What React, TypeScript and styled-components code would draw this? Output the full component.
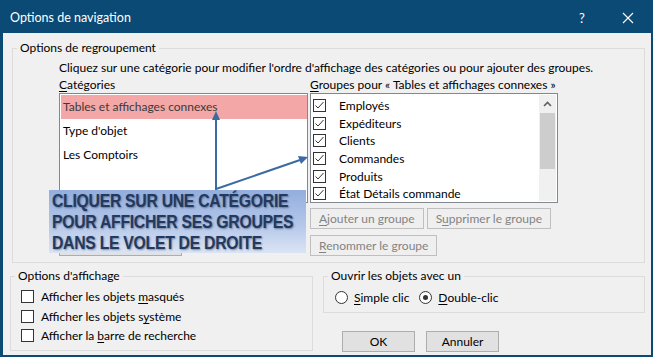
import React from 'react';
import styled, { createGlobalStyle } from 'styled-components';

const GlobalStyle = createGlobalStyle`
  html, body { margin: 0; padding: 0; background: #ffffff; }
  body { font-family: Lato, "Noto Sans", sans-serif; font-size: 12px; color: #000; }
  * { box-sizing: border-box; }
`;

const Page = styled.div`
  position: relative;
  width: 656px;
  height: 359px;
  overflow: hidden;
`;

const Window = styled.div`
  width: 653px;
  height: 357px;
  border: 2px solid #0b4a75;
  border-left-width: 3px;
  background: #f0f0f0;
  display: flex;
  flex-direction: column;
`;

const TitleBar = styled.div`
  height: 31px;
  flex: none;
  background: #0b4a75;
  color: #ffffff;
  display: flex;
  align-items: center;
  padding-left: 7px;
  font-size: 12.5px;
`;

const Title = styled.span`
  flex: 1;
`;

const TitleButton = styled.span`
  width: 46px;
  display: flex;
  justify-content: center;
  align-items: center;
  font-size: 13px;
`;

const Body = styled.div`
  flex: 1;
  display: flex;
  flex-direction: column;
  padding: 0 6px 0 7px;
`;

const Group = styled.fieldset<{ $ml?: number; $mt: number }>`
  margin: ${({ $mt }) => $mt}px 0 0 ${({ $ml }) => $ml ?? 0}px;
  padding: 0;
  border: 1px solid #dcdcdc;
  min-width: 0;
`;

const Legend = styled.legend`
  margin-left: 4px;
  padding: 0 3px;
  line-height: 16px;
`;

const GroupingInner = styled.div`
  padding: 4px 0 6px 46px;
`;

const Instruction = styled.div`
  line-height: 16px;
`;

const Columns = styled.div`
  display: grid;
  grid-template-columns: 249px 248px;
  column-gap: 2px;
  margin-top: 1px;
`;

const Column = styled.div`
  display: flex;
  flex-direction: column;
`;

const Label = styled.div`
  line-height: 16px;
  white-space: nowrap;
`;

const Key = styled.span`
  text-decoration: underline;
  text-underline-offset: 2px;
`;

const ListBox = styled.div`
  height: 110px;
  border: 1px solid #828790;
  background: #ffffff;
  display: flex;
`;

const CategoryList = styled.div`
  flex: 1;
  padding: 1px 0 0 1px;
`;

const CategoryRow = styled.div<{ $selected?: boolean }>`
  height: 24px;
  line-height: 24px;
  padding-left: 2px;
  background: ${({ $selected }) => ($selected ? '#f4a7a7' : 'transparent')};
  color: ${({ $selected }) => ($selected ? '#3a3a3a' : '#000')};
`;

const CheckList = styled.div`
  flex: 1;
  padding: 3px 0 0 2px;
  overflow: hidden;
`;

const CheckRow = styled.div`
  height: 17.6px;
  display: flex;
  align-items: center;
  gap: 13px;
  white-space: nowrap;
`;

const Box = styled.span`
  width: 13px;
  height: 13px;
  flex: none;
  border: 1px solid #333333;
  background: #ffffff;
  display: inline-flex;
`;

const Scrollbar = styled.div`
  width: 17px;
  margin: 1px 1px 1px 0;
  background: #f0f0f0;
  display: flex;
  flex-direction: column;
`;

const ScrollArrow = styled.div`
  height: 17px;
  display: flex;
  align-items: center;
  justify-content: center;
`;

const Thumb = styled.div`
  height: 56px;
  margin: 1px 1px 0;
  background: #cdcdcd;
`;

const ButtonRow = styled.div<{ $mt: number }>`
  display: flex;
  gap: 3px;
  margin-top: ${({ $mt }) => $mt}px;
`;

const Button = styled.button<{ $disabled?: boolean; $w?: number }>`
  height: 21px;
  width: ${({ $w }) => ($w ? `${$w}px` : 'auto')};
  padding: 0 8px;
  font-family: inherit;
  font-size: 12px;
  border: 1px solid ${({ $disabled }) => ($disabled ? '#bfbfbf' : '#adadad')};
  background: ${({ $disabled }) => ($disabled ? '#efefef' : '#e1e1e1')};
  color: ${({ $disabled }) => ($disabled ? '#838383' : '#000')};
  white-space: nowrap;
`;

const BottomRow = styled.div`
  display: flex;
  align-items: flex-start;
`;

const DisplayGroup = styled(Group)`
  width: 303px;
  height: 83px;
`;

const RightSide = styled.div`
  flex: 1;
  margin-left: 10px;
  display: flex;
  flex-direction: column;
`;

const OptionList = styled.div`
  padding: 3px 0 0 10px;
`;

const OptionRow = styled.label`
  height: 19.5px;
  display: flex;
  align-items: center;
  gap: 7px;
`;

const RadioRow = styled.div`
  display: flex;
  align-items: center;
  height: 20px;
  margin: 3px 0 5px;
  padding-left: 11px;
`;

const RadioItem = styled.label`
  display: flex;
  align-items: center;
  gap: 6px;
  margin-right: 10px;
`;

const Radio = styled.span<{ $on?: boolean }>`
  width: 13px;
  height: 13px;
  border: 1px solid #333333;
  border-radius: 50%;
  background: #ffffff;
  display: inline-flex;
  align-items: center;
  justify-content: center;
  &::after {
    content: '';
    width: 5px;
    height: 5px;
    border-radius: 50%;
    background: ${({ $on }) => ($on ? '#333333' : 'transparent')};
  }
`;

const DialogButtons = styled.div`
  display: flex;
  gap: 11px;
  margin: 18px 0 0 19px;
`;

const Callout = styled.div`
  position: absolute;
  left: 49px;
  top: 190px;
  width: 257px;
  height: 63px;
  padding: 1px 0 0 3px;
  background: linear-gradient(to bottom, #93aedd 0%, #b4c7ea 55%, #dbe4f4 100%);
  color: #23395e;
  font-family: "Liberation Sans Narrow", "Liberation Sans", Arial, sans-serif;
  font-weight: bold;
  font-size: 17.5px;
  line-height: 21px;
  letter-spacing: -0.3px;
  text-shadow: 1px 1px 2px rgba(20, 30, 60, 0.45);
`;

const CalloutLine = styled.div`
  white-space: nowrap;
  transform: scaleX(0.9);
  transform-origin: left center;
`;

const Arrows = styled.svg`
  position: absolute;
  left: 0;
  top: 0;
  pointer-events: none;
`;

const Check = () => (
  <svg width="11" height="11" viewBox="0 0 11 11">
    <polyline points="1.5,5.5 4,8 9.5,2" fill="none" stroke="#333" strokeWidth="1" />
  </svg>
);

const groups = ['Employés', 'Expéditeurs', 'Clients', 'Commandes', 'Produits', 'État Détails commande'];

export default function App() {
  return (
    <Page>
      <GlobalStyle />
      <Window>
        <TitleBar>
          <Title>Options de navigation</Title>
          <TitleButton>?</TitleButton>
          <TitleButton>
            <svg width="12" height="12" viewBox="0 0 12 12">
              <path d="M1 1 L11 11 M11 1 L1 11" stroke="#fff" strokeWidth="1.1" />
            </svg>
          </TitleButton>
        </TitleBar>
        <Body>
          <Group $mt={7} $ml={2}>
            <Legend>Options de regroupement</Legend>
            <GroupingInner>
              <Instruction>
                Cliquez sur une catégorie pour modifier l'ordre d'affichage des catégories ou pour ajouter des groupes.
              </Instruction>
              <Columns>
                <Column>
                  <Label>
                    <Key>C</Key>atégories
                  </Label>
                  <ListBox>
                    <CategoryList>
                      <CategoryRow $selected>Tables et affichages connexes</CategoryRow>
                      <CategoryRow>Type d'objet</CategoryRow>
                      <CategoryRow>Les Comptoirs</CategoryRow>
                    </CategoryList>
                  </ListBox>
                  {/* the category buttons lie under the callout; only the frame edge shows */}
                  <ButtonRow $mt={32}>
                    <Button $w={123} aria-hidden="true" />
                  </ButtonRow>
                </Column>
                <Column>
                  <Label>
                    <Key>G</Key>roupes pour « Tables et affichages connexes »
                  </Label>
                  <ListBox>
                    <CheckList>
                      {groups.map((g) => (
                        <CheckRow key={g}>
                          <Box>
                            <Check />
                          </Box>
                          {g}
                        </CheckRow>
                      ))}
                    </CheckList>
                    <Scrollbar>
                      <ScrollArrow>
                        <svg width="9" height="6" viewBox="0 0 9 6">
                          <polyline points="1,5 4.5,1.5 8,5" fill="none" stroke="#606060" strokeWidth="1.6" />
                        </svg>
                      </ScrollArrow>
                      <Thumb />
                    </Scrollbar>
                  </ListBox>
                  <ButtonRow $mt={5}>
                    <Button $disabled>
                      <Key>A</Key>jouter un groupe
                    </Button>
                    <Button $disabled>
                      S<Key>u</Key>pprimer le groupe
                    </Button>
                  </ButtonRow>
                  <ButtonRow $mt={6}>
                    <Button $disabled>
                      <Key>R</Key>enommer le groupe
                    </Button>
                  </ButtonRow>
                </Column>
              </Columns>
            </GroupingInner>
          </Group>
          <BottomRow>
            <DisplayGroup $mt={5}>
              <Legend>Options d'affichage</Legend>
              <OptionList>
                <OptionRow>
                  <Box />
                  <span>
                    Afficher les objets <Key>m</Key>asqués
                  </span>
                </OptionRow>
                <OptionRow>
                  <Box />
                  <span>
                    Afficher les objets s<Key>y</Key>stème
                  </span>
                </OptionRow>
                <OptionRow>
                  <Box />
                  <span>
                    Afficher la <Key>b</Key>arre de recherche
                  </span>
                </OptionRow>
              </OptionList>
            </DisplayGroup>
            <RightSide>
              <Group $mt={5}>
                <Legend>Ouvrir les objets avec un</Legend>
                <RadioRow>
                  <RadioItem>
                    <Radio />
                    <span>
                      <Key>S</Key>imple clic
                    </span>
                  </RadioItem>
                  <RadioItem>
                    <Radio $on />
                    <span>
                      <Key>D</Key>ouble-clic
                    </span>
                  </RadioItem>
                </RadioRow>
              </Group>
              <DialogButtons>
                <Button $w={73}>OK</Button>
                <Button $w={73}>Annuler</Button>
              </DialogButtons>
            </RightSide>
          </BottomRow>
        </Body>
      </Window>
      <Callout>
        <CalloutLine>CLIQUER SUR UNE CATÉGORIE</CalloutLine>
        <CalloutLine>POUR AFFICHER SES GROUPES</CalloutLine>
        <CalloutLine>DANS LE VOLET DE DROITE</CalloutLine>
      </Callout>
      <Arrows width="656" height="359" viewBox="0 0 656 359">
        <g stroke="#3b6ba0" strokeWidth="2" fill="#3b6ba0">
          <line x1="216" y1="190" x2="216" y2="118" />
          <polygon points="216,111 212,120 220,120" stroke="none" />
          <line x1="216" y1="189" x2="300" y2="160" />
          <polygon points="308,157 298,156 301,164" stroke="none" />
        </g>
      </Arrows>
    </Page>
  );
}
